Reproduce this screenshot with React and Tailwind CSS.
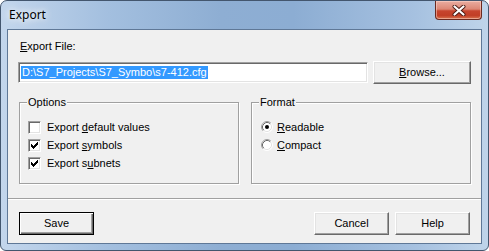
import { useState } from "react";

const raised =
  "border border-t-white border-l-white border-b-[#696969] border-r-[#696969] shadow-[inset_-1px_-1px_0_#a0a0a0,inset_1px_1px_0_#e3e3e3]";

const Button = ({ children, primary, className = "" }) => (
  <button
    type="button"
    className={`h-[23px] w-[75px] bg-[#f0f0f0] text-[11px] text-black leading-none ${
      primary
        ? "border border-black shadow-[inset_1px_1px_0_#fff,inset_-1px_-1px_0_#696969,inset_-2px_-2px_0_#a0a0a0]"
        : raised
    } ${className}`}
  >
    {children}
  </button>
);

const Check = ({ checked, children }) => (
  <div className="h-[18px] flex items-center gap-[6px]">
    <div className="w-[13px] h-[13px] bg-white border border-t-[#a0a0a0] border-l-[#a0a0a0] border-b-white border-r-white shadow-[inset_1px_1px_0_#696969,inset_-1px_-1px_0_#e3e3e3] flex items-center justify-center">
      {checked && (
        <svg width="7" height="7" viewBox="0 0 7 7" shapeRendering="crispEdges">
          <path
            d="M0 2h1v3H0zM1 3h1v3H1zM2 4h1v3H2zM3 3h1v3H3zM4 2h1v3H4zM5 1h1v3H5zM6 0h1v3H6z"
            fill="#000"
          />
        </svg>
      )}
    </div>
    <span>{children}</span>
  </div>
);

const Radio = ({ checked, children }) => (
  <div className="h-[18px] flex items-center gap-[4px]">
    <svg width="12" height="12" viewBox="0 0 12 12">
      <circle cx="6" cy="6" r="5" fill="#fff" />
      <path d="M2.11 9.89A5.5 5.5 0 0 1 9.89 2.11" fill="none" stroke="#a0a0a0" />
      <path d="M9.89 2.11A5.5 5.5 0 0 1 2.11 9.89" fill="none" stroke="#fff" />
      <path d="M2.82 9.18A4.5 4.5 0 0 1 9.18 2.82" fill="none" stroke="#696969" />
      <path d="M9.18 2.82A4.5 4.5 0 0 1 2.82 9.18" fill="none" stroke="#e3e3e3" />
      {checked && <circle cx="6" cy="6" r="2" fill="#000" />}
    </svg>
    <span>{children}</span>
  </div>
);

const Group = ({ title, children, className = "" }) => (
  <fieldset
    className={`w-[220px] h-[88px] border border-[#a0a0a0] shadow-[1px_1px_0_#fff,inset_1px_1px_0_#fff] ${className}`}
  >
    <legend className="ml-[7px] px-[1px] bg-[#f0f0f0] leading-[13px]">{title}</legend>
    {children}
  </fieldset>
);

export default function App() {
  const [file] = useState("D:\\S7_Projects\\S7_Symbo\\s7-412.cfg");

  return (
    <div
      className="w-[489px] h-[251px] flex flex-col rounded-t-[7px] rounded-b-[6px] border border-[#43566e] bg-[linear-gradient(90deg,#c3d6ec_0%,#a3bfdf_22%,#8eaed3_45%,#8cadd3_60%,#a6c1e0_85%,#bfd4ea_100%)] overflow-hidden"
      style={{ fontFamily: '"Liberation Sans", Arial, sans-serif' }}
    >
      {/* Title bar */}
      <div className="h-[28px] flex items-start shrink-0">
        <span
          className="pl-[8px] pt-[7px] text-[12px] leading-[14px] text-black [text-shadow:0_0_6px_#fff,0_0_10px_#fff]"
          style={{ fontFamily: '"Noto Sans", "Open Sans", sans-serif' }}
        >
          Export
        </span>
        <div className="ml-auto mr-[6px] w-[47px] h-[19px] rounded-b-[4px] border border-t-0 border-[#6b2a20] bg-[linear-gradient(180deg,#e9ada1_0%,#dc8775_45%,#c7452e_55%,#c13e26_80%,#d8744f_100%)] shadow-[inset_0_0_0_1px_rgba(255,220,210,0.5)] flex items-center justify-center">
          <svg width="14" height="11" viewBox="0 0 14 11">
            <path d="M2.5 1.5l9 8M11.5 1.5l-9 8" stroke="#4a1a12" strokeWidth="4" strokeLinecap="round" />
            <path d="M2.5 1.5l9 8M11.5 1.5l-9 8" stroke="#fff" strokeWidth="2.2" strokeLinecap="round" />
          </svg>
        </div>
      </div>

      {/* Client area */}
      <div className="flex-1 mx-[6px] mb-[6px] bg-[#f0f0f0] border border-[#5f7897] flex flex-col text-[11px] text-black leading-[13px]">
        <div className="mt-[10px] ml-[12px]">
          <u>E</u>xport File:
        </div>

        <div className="mt-[8px] ml-[10px] flex items-start gap-[5px]">
          <div className="mt-[1px] w-[350px] h-[21px] bg-white border border-t-[#a0a0a0] border-l-[#a0a0a0] border-b-white border-r-white shadow-[inset_1px_1px_0_#696969,inset_-1px_-1px_0_#e3e3e3] flex items-center pl-[2px]">
            <span className="bg-[#3399ff] text-white px-[1px] leading-[13px]">{file}</span>
          </div>
          <Button className="w-[98px] h-[22px]">
            <u>B</u>rowse...
          </Button>
        </div>

        <div className="mt-[12px] ml-[11px] flex gap-[12px]">
          <Group title="Options">
            <div className="pl-[8px] pt-[9px] flex flex-col">
              <Check>
                Export <u>d</u>efault values
              </Check>
              <Check checked>
                Export <u>s</u>ymbols
              </Check>
              <Check checked>
                Export s<u>u</u>bnets
              </Check>
            </div>
          </Group>
          <Group title="Format">
            <div className="pl-[9px] pt-[9px] flex flex-col">
              <Radio checked>
                <u>R</u>eadable
              </Radio>
              <Radio>
                <u>C</u>ompact
              </Radio>
            </div>
          </Group>
        </div>

        <div className="mt-[14px] h-[2px] border-t border-t-[#a0a0a0] border-b border-b-white" />

        <div className="mt-[12px] px-[11px] flex items-center gap-[6px]">
          <Button primary>Save</Button>
          <Button className="ml-auto">Cancel</Button>
          <Button>Help</Button>
        </div>
      </div>
    </div>
  );
}
